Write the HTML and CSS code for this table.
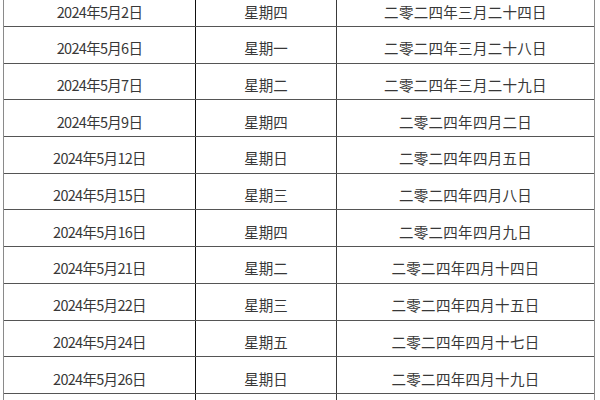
FILE: index.html
```html
<!DOCTYPE html>
<html lang="zh-CN">
<head>
<meta charset="utf-8">
<title>2024年5月日期表</title>
<link rel="stylesheet" href="styles.css">
</head>
<body>
<div class="table">
  <div class="row"><div class="cell c1">2024年5月2日</div><div class="cell c2">星期四</div><div class="cell c3">二零二四年三月二十四日</div></div>
  <div class="row"><div class="cell c1">2024年5月6日</div><div class="cell c2">星期一</div><div class="cell c3">二零二四年三月二十八日</div></div>
  <div class="row"><div class="cell c1">2024年5月7日</div><div class="cell c2">星期二</div><div class="cell c3">二零二四年三月二十九日</div></div>
  <div class="row"><div class="cell c1">2024年5月9日</div><div class="cell c2">星期四</div><div class="cell c3">二零二四年四月二日</div></div>
  <div class="row"><div class="cell c1">2024年5月12日</div><div class="cell c2">星期日</div><div class="cell c3">二零二四年四月五日</div></div>
  <div class="row"><div class="cell c1">2024年5月15日</div><div class="cell c2">星期三</div><div class="cell c3">二零二四年四月八日</div></div>
  <div class="row"><div class="cell c1">2024年5月16日</div><div class="cell c2">星期四</div><div class="cell c3">二零二四年四月九日</div></div>
  <div class="row"><div class="cell c1">2024年5月21日</div><div class="cell c2">星期二</div><div class="cell c3">二零二四年四月十四日</div></div>
  <div class="row"><div class="cell c1">2024年5月22日</div><div class="cell c2">星期三</div><div class="cell c3">二零二四年四月十五日</div></div>
  <div class="row"><div class="cell c1">2024年5月24日</div><div class="cell c2">星期五</div><div class="cell c3">二零二四年四月十七日</div></div>
  <div class="row"><div class="cell c1">2024年5月26日</div><div class="cell c2">星期日</div><div class="cell c3">二零二四年四月十九日</div></div>
  <div class="row"><div class="cell c1"></div><div class="cell c2"></div><div class="cell c3"></div></div>
</div>
</body>
</html>
```
FILE: styles.css
```css
html, body {
  margin: 0;
  padding: 0;
  background: #ffffff;
  overflow: hidden;
}
body {
  font-family: "Noto Sans CJK SC", "Noto Sans", sans-serif;
  font-size: 14.5px;
  color: #383838;
}
.table {
  width: 592px;
  margin: -9.7px 0 0 3px;
  box-sizing: border-box;
  border-left: 1px solid #8a8a8a;
  border-right: 1px solid #8a8a8a;
}
.row {
  display: grid;
  grid-template-columns: 192px 141px 1fr;
  height: 36.7px;
  box-sizing: border-box;
  border-bottom: 1px solid #555555;
}
.cell {
  display: flex;
  align-items: center;
  justify-content: center;
  padding-top: 6px;
  box-sizing: border-box;
  white-space: nowrap;
}
.c1 {
  border-right: 1px solid #111111;
  letter-spacing: -0.7px;
}
.c2 {
  border-right: 1px solid #3a3a3a;
}
.c3 {
  letter-spacing: 0.3px;
}
```
